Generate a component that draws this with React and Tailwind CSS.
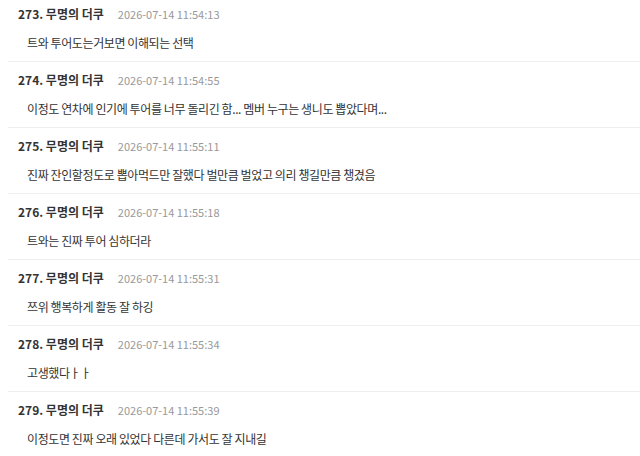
const comments = [
  { no: 273, time: '2026-07-14 11:54:13', text: '트와 투어도는거보면 이해되는 선택' },
  { no: 274, time: '2026-07-14 11:54:55', text: '이정도 연차에 인기에 투어를 너무 돌리긴 함... 멤버 누구는 생니도 뽑았다며...' },
  { no: 275, time: '2026-07-14 11:55:11', text: '진짜 잔인할정도로 뽑아먹드만 잘했다 벌만큼 벌었고 의리 챙길만큼 챙겼음' },
  { no: 276, time: '2026-07-14 11:55:18', text: '트와는 진짜 투어 심하더라' },
  { no: 277, time: '2026-07-14 11:55:31', text: '쯔위 행복하게 활동 잘 하깅' },
  { no: 278, time: '2026-07-14 11:55:34', text: '고생했다ㅏㅏ' },
  { no: 279, time: '2026-07-14 11:55:39', text: '이정도면 진짜 오래 있었다 다른데 가서도 잘 지내길' },
]

const Comment = ({ no, time, text }) => (
  <li className="border-b border-[#eeeeee] pl-[10px] pt-2 pb-2">
    <div className="flex items-center h-5">
      <span className="text-[12px] font-bold text-[#333]">{no}. 무명의 더쿠</span>
      <span className="ml-[14px] text-[11px] text-[#999]">{time}</span>
    </div>
    <p className="mt-[9px] h-5 leading-5 pl-[9px] text-[12px] tracking-[-0.4px] text-[#333]">{text}</p>
  </li>
)

export default function App() {
  return (
    <div
      className="w-[640px] h-[456px] overflow-hidden bg-white"
      style={{ fontFamily: '"Noto Sans CJK KR", "Noto Sans", sans-serif' }}
    >
      <ul className="-mt-1 ml-2">
        {comments.map((c) => (
          <Comment key={c.no} {...c} />
        ))}
      </ul>
    </div>
  )
}
